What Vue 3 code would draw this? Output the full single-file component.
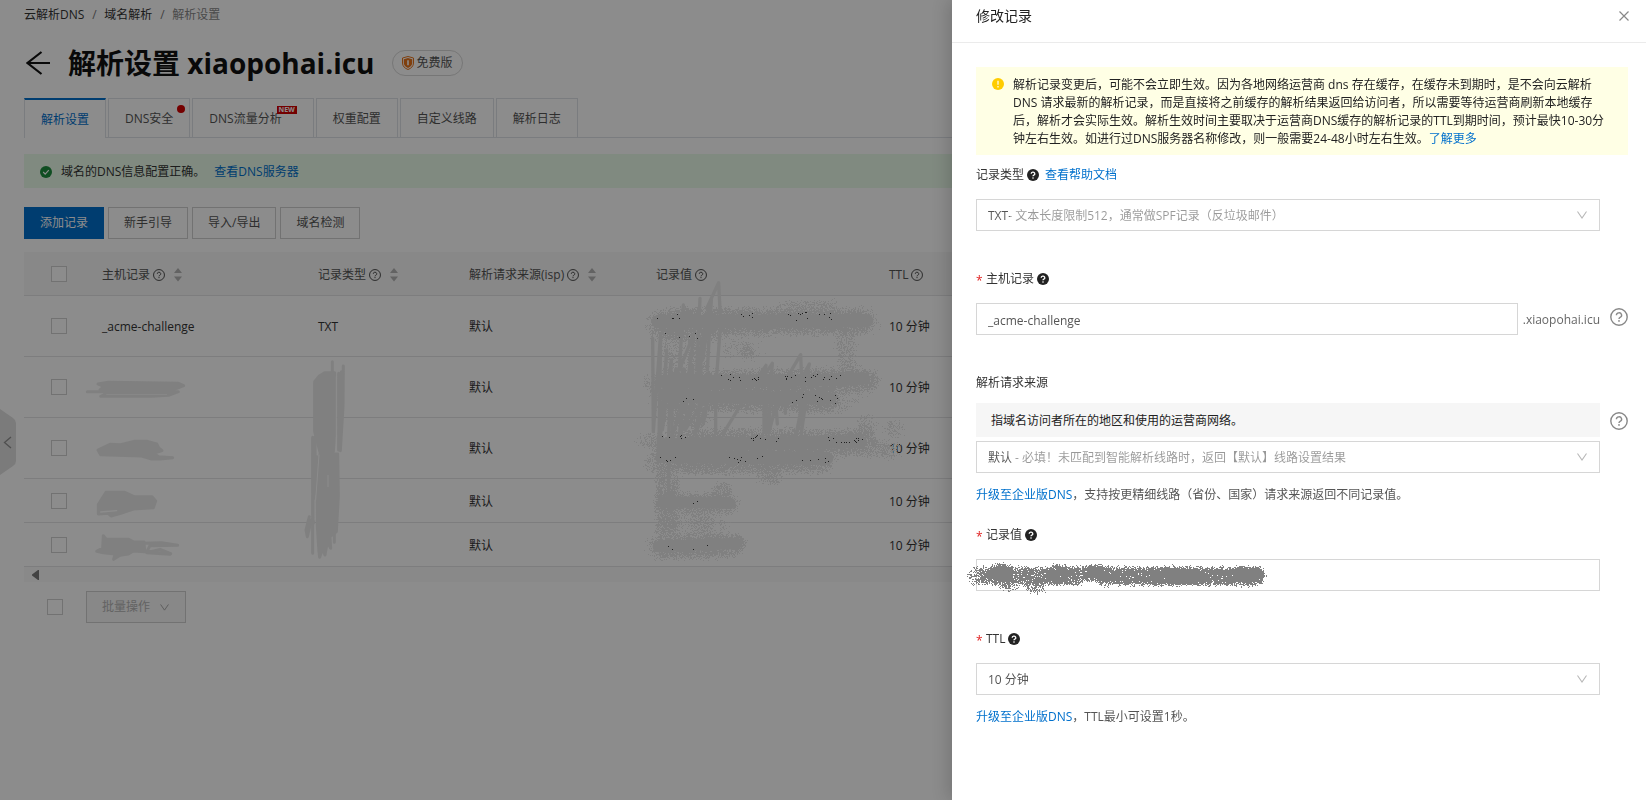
<script setup>
import { ref } from 'vue'

const tabs = [
  { text: '解析设置', active: true },
  { text: 'DNS安全', dot: true },
  { text: 'DNS流量分析', tag: 'NEW' },
  { text: '权重配置' },
  { text: '自定义线路' },
  { text: '解析日志' },
]

const columns = [
  { text: '主机记录', sort: true },
  { text: '记录类型', sort: true },
  { text: '解析请求来源(isp)', sort: true },
  { text: '记录值' },
  { text: 'TTL' },
]

const rows = [
  { host: '_acme-challenge', type: 'TXT', tall: true },
  { host: '', type: '', tall: true },
  { host: '', type: '', tall: true },
  { host: '', type: '' },
  { host: '', type: '' },
]

const host = ref('_acme-challenge')
const value = ref('')

/* Deterministic airbrush: pixels of `size` scattered round each segment. */
function spray(segments, size, seed) {
  let s = seed
  const rnd = () => {
    s = (s * 1664525 + 1013904223) % 4294967296
    return s / 4294967296
  }
  const seen = new Set()
  for (const [x1, y1, x2, y2, r, n] of segments) {
    for (let i = 0; i < n; i++) {
      const t = rnd()
      const a = rnd() * Math.PI * 2
      const d = ((rnd() + rnd()) / 2 + rnd() * 0.4) * r
      const x = Math.round((x1 + (x2 - x1) * t + Math.cos(a) * d) / size) * size
      const y = Math.round((y1 + (y2 - y1) * t + Math.sin(a) * d) / size) * size
      seen.add(`M${x} ${y}h${size}v${size}h-${size}z`)
    }
  }
  return [...seen].join('')
}

const tableSpray = spray([
  [560, 218, 1190, 212, 38, 8500], [600, 190, 850, 190, 20, 700], [930, 175, 1090, 170, 22, 420],
  [560, 245, 740, 255, 26, 900], [770, 290, 860, 300, 34, 130], [828, 302, 832, 306, 18, 150],
  [600, 270, 620, 350, 34, 260], [680, 270, 680, 350, 34, 500],
  [1125, 250, 1130, 370, 30, 420], [570, 400, 1190, 390, 38, 8000], [1190, 390, 1205, 390, 26, 220],
  [570, 445, 1075, 448, 38, 6000], [1065, 450, 1080, 450, 34, 420], [1090, 460, 1150, 430, 34, 130],
  [590, 490, 690, 500, 34, 900],
  [540, 390, 550, 400, 26, 70], [570, 590, 1190, 575, 40, 8000], [600, 555, 1000, 550, 22, 900],
  [1190, 515, 1180, 560, 28, 260], [1190, 590, 1270, 600, 26, 320], [1260, 530, 1280, 540, 26, 110],
  [520, 570, 550, 570, 24, 110], [570, 630, 1065, 630, 36, 5600], [545, 630, 560, 640, 28, 140],
  [640, 655, 780, 660, 18, 260], [870, 670, 920, 680, 24, 240], [590, 660, 590, 860, 34, 1800],
  [570, 755, 780, 760, 30, 1900], [745, 725, 765, 725, 26, 280], [640, 810, 740, 830, 44, 480],
  [560, 890, 790, 885, 36, 2600], [800, 875, 805, 880, 24, 220],
], 3, 7)

const specks = spray([
  [560, 198, 740, 196, 12, 5], [820, 196, 860, 198, 10, 5], [950, 195, 1090, 195, 14, 14],
  [595, 250, 735, 255, 16, 5], [760, 380, 870, 385, 12, 13], [930, 382, 1110, 380, 10, 18],
  [620, 445, 750, 440, 12, 3], [940, 445, 1095, 445, 14, 13], [560, 565, 660, 565, 14, 6],
  [840, 565, 970, 570, 12, 10], [1050, 570, 1200, 570, 12, 16], [565, 625, 620, 625, 14, 5],
  [740, 625, 880, 628, 10, 9], [980, 630, 1080, 628, 10, 6], [590, 755, 770, 755, 8, 2],
  [590, 890, 760, 890, 10, 4],
], 3, 21)

const inputSpray = spray([
  [72, 196, 120, 196, 26, 380], [120, 195, 380, 198, 26, 3000], [135, 184, 165, 184, 22, 900],
  [150, 215, 190, 222, 20, 200], [235, 225, 270, 232, 20, 160], [310, 186, 345, 190, 24, 700],
  [375, 190, 470, 190, 22, 800], [420, 182, 450, 186, 20, 600], [450, 196, 920, 198, 26, 7000],
  [600, 199, 760, 200, 22, 2200], [860, 190, 915, 194, 20, 900], [915, 196, 925, 196, 22, 240],
], 3, 5)
</script>

<template>
  <div class="app">
    <svg class="defs" width="0" height="0" aria-hidden="true">
      <symbol id="q-line" viewBox="0 0 18 18">
        <circle cx="9" cy="9" r="8.2" fill="none" stroke="currentColor" stroke-width="1.4" />
        <path d="M6.4 7.2a2.6 2.4 0 1 1 3.7 2.2c-.8.4-1.1.8-1.1 1.6" fill="none" stroke="currentColor" stroke-width="1.4" />
        <circle cx="9" cy="12.9" r=".9" fill="currentColor" />
      </symbol>
      <symbol id="q-solid" viewBox="0 0 12 12">
        <circle cx="6" cy="6" r="6" fill="#222" />
        <path d="M4.2 4.8a1.8 1.6 0 1 1 2.6 1.4c-.6.3-.8.5-.8 1.1" fill="none" stroke="#fff" stroke-width="1.3" />
        <circle cx="6" cy="9" r=".8" fill="#fff" />
      </symbol>
      <symbol id="chevron" viewBox="0 0 10 8">
        <path d="M.5 .5 5 7 9.500 .5" fill="none" stroke="currentColor" stroke-width="1.1" />
      </symbol>
    </svg>

    <main class="page">
      <nav class="crumbs" aria-label="路径">
        <a href="#">云解析DNS</a><i>/</i><a href="#">域名解析</a><i>/</i><span>解析设置</span>
      </nav>

      <header class="heading">
        <button class="back" type="button" aria-label="返回">
          <svg width="24" height="24" viewBox="0 0 24 24"><path d="M24 12H1.500M15.500 1 1.500 12l14 11" fill="none" stroke="#111" stroke-width="2.200" /></svg>
        </button>
        <h1>解析设置 xiaopohai.icu</h1>
        <span class="plan">
          <svg width="12" height="14" viewBox="0 0 12 14">
            <path d="M6 .5 11.500 2v5c0 3.200-2.400 5.400-5.500 6.500C2.900 12.400.5 10.200.5 7V2z" fill="none" stroke="#e8731a" />
            <path d="M6 2 10.200 3.200V7c0 2.200-1.800 4-4.200 5C3.600 11 1.800 9.200 1.800 7V3.200z" fill="#e8731a" />
            <path d="M6 4.200v5" stroke="#fff" stroke-width="1.600" />
          </svg>
          免费版
        </span>
      </header>

      <div class="tabs" role="tablist">
        <button v-for="t in tabs" :key="t.text" class="tab" :class="{ active: t.active, tagged: t.tag }" type="button" role="tab" :aria-selected="!!t.active">
          {{ t.text }}
          <b v-if="t.dot" class="dot"></b>
          <b v-if="t.tag" class="tag">{{ t.tag }}</b>
        </button>
      </div>

      <div class="notice">
        <svg width="12" height="12" viewBox="0 0 12 12"><circle cx="6" cy="6" r="6" fill="#1e8e3e" /><path d="m3.200 6 2 2.100 3.600-3.900" fill="none" stroke="#fff" stroke-width="1.200" /></svg>
        <span>域名的DNS信息配置正确。</span>
        <a href="#">查看DNS服务器</a>
      </div>

      <div class="actions">
        <button class="btn primary" type="button">添加记录</button>
        <button class="btn" type="button">新手引导</button>
        <button class="btn" type="button">导入/导出</button>
        <button class="btn" type="button">域名检测</button>
      </div>

      <div class="grid">
        <table>
          <colgroup>
            <col class="c-check" /><col class="c-host" /><col class="c-type" /><col class="c-isp" /><col class="c-value" /><col />
          </colgroup>
          <thead>
            <tr>
              <th><input type="checkbox" aria-label="全选" /></th>
              <th v-for="c in columns" :key="c.text">
                <span class="th">
                  {{ c.text }}
                  <svg class="q" width="12" height="12"><use href="#q-line" /></svg>
                  <svg v-if="c.sort" class="sort" width="8" height="14" viewBox="0 0 8 14"><path d="M4 0 8 5H0zM4 13.500 8 8.500H0z" fill="#b4b4b4" /></svg>
                </span>
              </th>
            </tr>
          </thead>
          <tbody>
            <tr v-for="(r, i) in rows" :key="i" :class="{ tall: r.tall }">
              <td><input type="checkbox" :aria-label="'选择第' + (i + 1) + '行'" /></td>
              <td>{{ r.host }}</td>
              <td>{{ r.type }}</td>
              <td>默认</td>
              <td></td>
              <td>10 分钟</td>
            </tr>
          </tbody>
        </table>
        <div class="scroller">
          <svg width="7" height="10" viewBox="0 0 7 10"><path d="M7 0v10H6L0 5.500v-1L6 0z" fill="#7a7a7a" /></svg>
        </div>

        <svg class="marks" width="960" height="330" aria-hidden="true">
          <svg x="-24" y="-12" width="480" height="330" viewBox="0 0 1440 990" overflow="visible">
            <g fill="#808080" stroke="#808080" stroke-width="9" stroke-linejoin="round" stroke-linecap="round">
              <path d="M262 455H535L505 466 455 469H302L325 459 300 450 312 440 294 432 325 427 535 430 551 437 530 445 510 450 525 455" />
              <path d="M320 463H500" fill="none" stroke="#8c8c8c" stroke-width="2" />
              <path d="M294 630 330 613 362 614 402 604H442L470 612 476 624 486 632 460 640 476 650 518 653 480 657 455 657 425 648 302 644z" />
              <path d="M318 757H374L402 770 456 770 467 783 460 803 400 807 362 820 333 828 325 820 295 822 295 794z" />
              <path d="M302 816 350 812" fill="none" stroke="#8c8c8c" stroke-width="4" />
              <path d="M310 887 318 897 386 898 402 906H432L434 935 400 933 385 942 360 946 341 958 345 942 310 938 290 934 308 924z" />
              <path d="M430 910 485 908 533 916 450 917 442 932 510 943 440 938 480 928 512 941" fill="none" />
              <path d="M944 425 958 408 974 398 1004 398V580L1000 635 960 636 944 575z" />
              <path d="M997 365V410M1030 378 1029 500 1021 632M1016 400V630M1024 395V560M938 592V940M945 592 946 760" fill="none" />
              <path d="M960 642H1013L1015 768 1009 875 990 890 992 925 982 905 975 945 968 925 959 952 957 935 952 860 951 720z" />
              <path d="M951 650 941 790 940 850M928 830 918 870 922 890 934 840M1003 870V907" fill="none" />
              <path d="M1009 410V600M984 706V740M957 645 947 780M945 780V840" fill="none" stroke="#8c8c8c" stroke-width="3" />
            </g>
          </svg>
          <svg x="446" y="-2" width="490" height="330" viewBox="0 0 1470 990" overflow="visible">
            <g fill="none" stroke="#808080" stroke-width="10" stroke-linejoin="round" stroke-linecap="round">
              <path d="M548 265 550 545 572 250 566 635 590 300 577 540 604 330 596 560M640 165 628 360 672 250 650 420M690 145 680 360 715 180 698 330 724 150 712 360M710 175 746 98 752 220 740 375" />
              <path d="M606 470V560L636 470 628 560 660 470 645 540 690 470 675 555 712 460 700 520M737 460V550M812 465 760 550" />
              <path d="M865 380 888 346 880 380 907 340 904 380M950 385 992 314 995 385 1018 342 1008 385M888 465V545M900 465 896 550 918 465 922 522M946 465V490M996 465 978 555 1006 465 994 550" />
              <path d="M565 560V635M596 640V735" />
              <path d="M565 215 1190 212" stroke-width="40" />
              <path d="M580 395 1110 390 1180 385M590 440 1080 445" stroke-width="38" />
              <path d="M885 470V545M640 360V480M620 360V470M665 350V470M690 300V470" stroke-width="16" />
              <path d="M580 585 1170 575M590 620 1070 625" stroke-width="40" />
              <path d="M580 755 780 760M565 890 800 880" stroke-width="34" />
            </g>
            <path :d="tableSpray" fill="#808080" shape-rendering="crispEdges" />
            <path :d="specks" fill="#202020" shape-rendering="crispEdges" />
          </svg>
        </svg>
      </div>

      <div class="batch">
        <input type="checkbox" aria-label="全选记录" />
        <button class="btn off" type="button" disabled>批量操作 <svg width="9" height="7"><use href="#chevron" /></svg></button>
      </div>

      <button class="handle" type="button" aria-label="展开菜单">
        <svg width="16" height="66" viewBox="0 0 16 66">
          <path d="M0 0 13 9q3 2 3 5v38q0 3-3 5L0 66z" fill="#e0e0e0" />
          <path d="M11 28 4.500 33.500 11 39" fill="none" stroke="#909090" stroke-width="1.300" />
        </svg>
      </button>
    </main>

    <div class="mask"></div>

    <aside class="drawer" role="dialog" aria-labelledby="drawer-title">
      <header class="drawer-head">
        <h2 id="drawer-title">修改记录</h2>
        <button type="button" aria-label="关闭">
          <svg width="10" height="10" viewBox="0 0 10 10"><path d="m.5.5 9 9m0-9-9 9" stroke="#888" stroke-width="1.200" /></svg>
        </button>
      </header>

      <form class="form" @submit.prevent>
        <div class="warn">
          <svg width="12" height="12" viewBox="0 0 12 12"><circle cx="6" cy="6" r="6" fill="#fc0" /><path d="M6 2.800v4M6 8v1.400" stroke="#fff" stroke-width="1.200" /></svg>
          <p>
            解析记录变更后，可能不会立即生效。因为各地网络运营商 dns 存在缓存，在缓存未到期时，是不会向云解析<br />
            DNS 请求最新的解析记录，而是直接将之前缓存的解析结果返回给访问者，所以需要等待运营商刷新本地缓存<br />
            后，解析才会实际生效。解析生效时间主要取决于运营商DNS缓存的解析记录的TTL到期时间，预计最快10-30分<br />
            钟左右生效。如进行过DNS服务器名称修改，则一般需要24-48小时左右生效。<a href="#">了解更多</a>
          </p>
        </div>

        <div class="field first">
          <div class="label">
            <label for="f-type">记录类型</label><svg width="12" height="12"><use href="#q-solid" /></svg><a href="#">查看帮助文档</a>
          </div>
          <div class="control">
            <div class="box">
              <select id="f-type" class="lead-type"><option>TXT- 文本长度限制512，通常做SPF记录（反垃圾邮件）</option></select>
              <svg class="arrow" width="10" height="8"><use href="#chevron" /></svg>
            </div>
          </div>
        </div>

        <div class="field">
          <div class="label"><em>*</em><label for="f-host">主机记录</label><svg width="12" height="12"><use href="#q-solid" /></svg></div>
          <div class="control">
            <div class="box"><input id="f-host" v-model="host" type="text" /></div>
            <span class="suffix">.xiaopohai.icu</span>
            <svg class="help-icon" width="18" height="18"><use href="#q-line" /></svg>
          </div>
        </div>

        <div class="field">
          <div class="label tight"><label for="f-isp">解析请求来源</label></div>
          <div class="control tip-row">
            <p class="tip">指域名访问者所在的地区和使用的运营商网络。</p>
            <svg class="help-icon low" width="18" height="18"><use href="#q-line" /></svg>
          </div>
          <div class="control">
            <div class="box">
              <select id="f-isp" class="lead-isp"><option>默认 - 必填！未匹配到智能解析线路时，返回【默认】线路设置结果</option></select>
              <svg class="arrow" width="10" height="8"><use href="#chevron" /></svg>
            </div>
          </div>
          <p class="help"><a href="#">升级至企业版DNS</a>，支持按更精细线路（省份、国家）请求来源返回不同记录值。</p>
        </div>

        <div class="field near">
          <div class="label"><em>*</em><label for="f-value">记录值</label><svg width="12" height="12"><use href="#q-solid" /></svg></div>
          <div class="control">
            <div class="box">
              <input id="f-value" v-model="value" type="text" />
              <svg class="smear" width="350" height="90" viewBox="0 0 1050 270" aria-hidden="true">
                <path :d="inputSpray" fill="#808080" shape-rendering="crispEdges" />
              </svg>
            </div>
          </div>
        </div>

        <div class="field">
          <div class="label"><em>*</em><label for="f-ttl">TTL</label><svg width="12" height="12"><use href="#q-solid" /></svg></div>
          <div class="control">
            <div class="box">
              <select id="f-ttl"><option>10 分钟</option></select>
              <svg class="arrow" width="10" height="8"><use href="#chevron" /></svg>
            </div>
          </div>
          <p class="help"><a href="#">升级至企业版DNS</a>，TTL最小可设置1秒。</p>
        </div>
      </form>
    </aside>
  </div>
</template>

<style>
body {
  margin: 0;
  overflow: hidden;
  background: #fff;
}
</style>

<style scoped>
.app,
.app button,
.app input,
.app select {
  font-family: "Open Sans", "Noto Sans CJK SC", sans-serif;
  font-size: 12px;
  line-height: 18px;
  color: #333;
}
.app * { box-sizing: border-box; }
.app { min-height: 100vh; }
.defs { position: absolute; }
svg { display: block; flex: none; }
.app a { color: #0070cc; text-decoration: none; }
.app button { padding: 0; border: 0; background: none; }
p, h1, h2 { margin: 0; }

.page {
  position: relative;
  min-height: 100vh;
  padding: 6px 24px 0;
}
.crumbs { display: flex; height: 18px; color: #888; }
.app .crumbs a { color: #333; }
.crumbs i { width: 20px; text-align: center; font-style: normal; color: #777; }

.heading { display: flex; align-items: center; height: 40px; margin-top: 19px; }
.app .back { margin: 0 18px 0 2px; }
h1 { font-size: 28px; font-weight: 700; line-height: 40px; color: #111; white-space: nowrap; }
.plan {
  display: flex;
  align-items: center;
  gap: 3px;
  height: 26px;
  margin-left: 17px;
  padding: 0 9px;
  border: 1px solid #d8d8d8;
  border-radius: 13px;
  color: #555;
}

.tabs { display: flex; gap: 2px; height: 40px; margin-top: 15px; border-bottom: 1px solid #dee2e8; }
.app .tab {
  position: relative;
  height: 39px;
  padding: 2px 16px 0;
  border: 1px solid #dee2e8;
  border-bottom: 0;
  color: #555;
  white-space: nowrap;
}
.app .tab.active { height: 40px; padding-top: 1px; border-top: 2px solid #0070cc; background: #fff; color: #0070cc; }
.app .tab.tagged { padding-right: 31px; }
.dot { position: absolute; top: 6px; right: 4px; width: 8px; height: 8px; border-radius: 50%; background: #d40000; }
.tag {
  position: absolute;
  top: 7px;
  right: 16px;
  width: 20px;
  height: 8px;
  background: #d40000;
  color: #fff;
  font-size: 7px;
  line-height: 8px;
  text-align: center;
}

.notice { display: flex; align-items: center; gap: 9px; height: 34px; margin-top: 16px; padding: 1px 16px 0; background: #e9fbe9; }

.actions { display: flex; gap: 4px; margin-top: 19px; }
.app .btn { height: 32px; padding: 0 15px; border: 1px solid #cfcfcf; color: #555; white-space: nowrap; }
.app .btn.primary { border-color: #0070cc; background: #0070cc; color: #fff; }

.grid { position: relative; margin-top: 13px; }
table { width: 100%; table-layout: fixed; border-collapse: separate; border-spacing: 0; }
.c-check { width: 62px; }
.c-host { width: 216px; }
.c-type { width: 151px; }
.c-isp { width: 187px; }
.c-value { width: 233px; }
th, td { height: 44px; padding: 2px 16px 0; border-bottom: 1px solid #e3e4e6; text-align: left; font-weight: 400; vertical-align: middle; white-space: nowrap; }
th { background: #f7f7f7; color: #555; }
.tall td { height: 61px; }
th:first-child, td:first-child { padding: 0 0 0 27px; }
.th { display: flex; align-items: center; }
.q { margin-left: 3px; color: #444; }
.sort { margin-left: 9px; }
input[type="checkbox"] { display: block; width: 16px; height: 16px; margin: 0; appearance: none; border: 1px solid #cfcfcf; background: #fff; }
.scroller { height: 15px; padding: 3px 8px; background: #f9f9f9; }
.marks { position: absolute; top: 0; left: 0; z-index: 2; overflow: visible; pointer-events: none; }

.batch { display: flex; align-items: center; gap: 23px; margin-top: 9px; padding-left: 23px; }
.app .btn.off { display: flex; align-items: center; gap: 10px; padding: 0 16px 0 15px; background: #f7f7f7; color: #b4b4b4; }
.btn.off svg { color: #a8a8a8; }
.handle { position: absolute; top: 409px; left: 0; }

.mask { position: fixed; inset: 0; z-index: 1; background: rgba(0, 0, 0, .45); }

.drawer {
  position: fixed;
  top: 0;
  right: 0;
  bottom: 0;
  z-index: 3;
  width: min(694px, 100%);
  background: #fff;
  box-shadow: -4px 0 16px rgba(0, 0, 0, .16);
}
.drawer-head { display: flex; align-items: center; justify-content: space-between; height: 43px; padding: 0 17px 11px 24px; border-bottom: 1px solid #ebebeb; }
h2 { font-size: 14px; font-weight: 400; line-height: 20px; color: #222; }
.form { padding: 24px 18px 24px 24px; }
.warn { display: flex; gap: 9px; padding: 9px 16px 7px; background: #ffffe5; white-space: nowrap; }
.warn svg { margin-top: 2px; }
.warn p { color: #222; }

.field { margin-top: 39px; padding-right: 28px; }
.field.first { margin-top: 11px; }
.field.near { margin-top: 22px; }
.label { display: flex; align-items: center; height: 18px; margin-bottom: 15px; }
.label.tight { margin-bottom: 11px; }
.label em { width: 10px; padding-top: 3px; color: #e02020; font-style: normal; }
.label svg { margin-left: 3px; }
.label a { margin-left: 6px; }
.control { position: relative; display: flex; align-items: center; }
.tip-row { margin-bottom: 4px; }
.tip { flex: 1; padding: 9px 15px 7px; background: #f6f6f6; color: #222; }
.box { position: relative; flex: 1; height: 32px; border: 1px solid #d6d6d6; background: #fff; }
.app .box input, .app .box select {
  display: block;
  width: 100%;
  height: 30px;
  margin: 0;
  padding: 2px 11px 0;
  border: 0;
  outline: 0;
  appearance: none;
  background: none;
  color: #555;
}
.app .box .lead-type, .app .box .lead-isp { -webkit-background-clip: text; background-clip: text; color: transparent; }
.app .box .lead-type { background-image: linear-gradient(90deg, #555 33px, #999 33px); }
.app .box .lead-isp { background-image: linear-gradient(90deg, #555 36px, #999 36px); }
.arrow { position: absolute; top: 11px; right: 12px; color: #b8b8b8; pointer-events: none; }
.suffix { margin-left: 5px; padding-top: 2px; color: #666; }
.help-icon { position: absolute; top: 5px; right: -28px; color: #888; }
.help-icon.low { top: 9px; }
.help { margin-top: 13px; color: #555; }
.smear { position: absolute; top: -50px; left: -27px; pointer-events: none; }
</style>
